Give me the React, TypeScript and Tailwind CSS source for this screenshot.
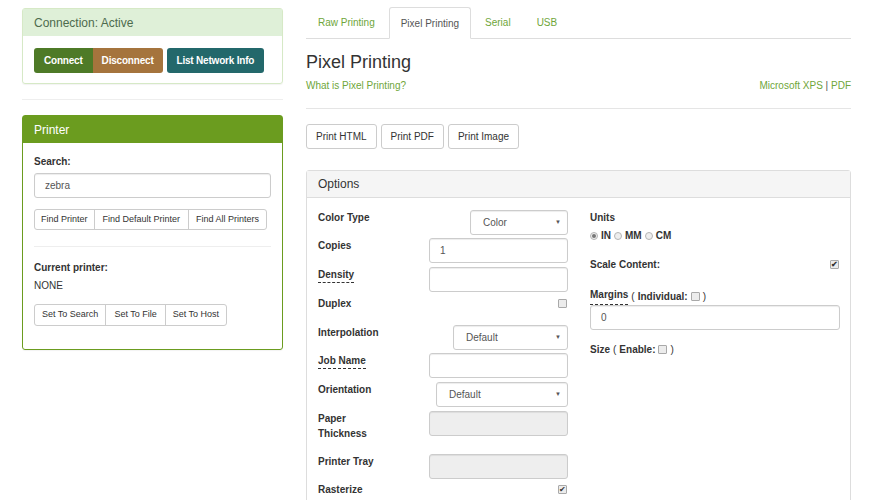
import React from 'react'

const font = { fontFamily: '"Liberation Sans", Arial, sans-serif' }

function Check({ checked = false }: { checked?: boolean }) {
  return (
    <span className="inline-flex h-[9px] w-[9px] items-center justify-center rounded-[1px] border border-[#a9a9a9] bg-[#ececec] text-[8px] leading-none text-[#333]">
      {checked ? '✔' : ''}
    </span>
  )
}

function Radio({ checked = false }: { checked?: boolean }) {
  return (
    <span className="inline-flex h-[8px] w-[8px] items-center justify-center rounded-full border border-[#b5b5b5] bg-[#eee]">
      {checked && <span className="h-[4px] w-[4px] rounded-full bg-[#777]" />}
    </span>
  )
}

function Dashed({ children }: { children: React.ReactNode }) {
  return <span className="border-b border-dashed border-[#333] pb-[2px]">{children}</span>
}

function Select({ value, w }: { value: string; w: string }) {
  return (
    <div className={`${w} flex h-[25px] items-center justify-between rounded-[3px] border border-[#ccc] bg-white pl-[12px] pr-[6px] text-[10px] text-[#555] shadow-[inset_0_1px_1px_rgba(0,0,0,0.075)]`}>
      <span>{value}</span>
      <span className="text-[6px]">▼</span>
    </div>
  )
}

function Input({ value = '', disabled = false, w = 'w-[139px]' }: { value?: string; disabled?: boolean; w?: string }) {
  return (
    <div
      className={`${w} flex h-[25px] items-center rounded-[3px] border border-[#ccc] px-[10px] text-[10px] text-[#555] shadow-[inset_0_1px_1px_rgba(0,0,0,0.075)] ${
        disabled ? 'bg-[#eee]' : 'bg-white'
      }`}
    >
      {value}
    </div>
  )
}

function Row({ label, h, children }: { label: React.ReactNode; h: string; children?: React.ReactNode }) {
  return (
    <div className={`flex items-start justify-between ${h}`}>
      <div className="whitespace-nowrap text-[10px] font-bold leading-[15px] text-[#333]">{label}</div>
      {children}
    </div>
  )
}

export default function App() {
  return (
    <div style={font} className="flex h-[500px] w-[888px] gap-[23px] overflow-hidden bg-white pl-[22px] pt-[8px] text-[#333]">
      {/* left column */}
      <div className="w-[261px] shrink-0">
        <div className="rounded-[3px] border border-[#d6e9c6] shadow-[0_1px_1px_rgba(0,0,0,0.05)]">
          <div className="flex h-[27px] items-center bg-[#dff0d8] px-[11px] text-[12px] text-[#4d6b4d]">Connection: Active</div>
          <div className="flex gap-[4px] whitespace-nowrap px-[11px] pb-[10px] pt-[12px] text-[10px] font-bold tracking-[-0.2px] text-white">
            <div className="flex">
              <span className="flex h-[25px] items-center rounded-l-[3px] bg-[#4e7a27] px-[10px]">Connect</span>
              <span className="flex h-[25px] items-center rounded-r-[3px] bg-[#a5743d] px-[9px]">Disconnect</span>
            </div>
            <span className="flex h-[25px] items-center rounded-[3px] bg-[#23686b] px-[10px]">List Network Info</span>
          </div>
        </div>

        <div className="my-[15px] border-t border-[#eee]" />

        <div className="rounded-[3px] border border-[#6b9c1f] shadow-[0_1px_1px_rgba(0,0,0,0.05)]">
          <div className="flex h-[27px] items-center bg-[#6b9c1f] px-[11px] text-[12px] text-white">Printer</div>
          <div className="px-[11px] pb-[23px] pt-[12px]">
            <div className="text-[10px] font-bold leading-[14px]">Search:</div>
            <Input value="zebra" w="w-[237px] mt-[4px]" />
            <div className="mt-[11px] flex whitespace-nowrap text-[9px] text-[#333]">
              <span className="flex h-[21px] items-center rounded-l-[3px] border border-[#ccc] px-[6px]">Find Printer</span>
              <span className="-ml-px flex h-[21px] items-center border border-[#ccc] px-[8px]">Find Default Printer</span>
              <span className="-ml-px flex h-[21px] items-center rounded-r-[3px] border border-[#ccc] px-[7px]">Find All Printers</span>
            </div>
            <div className="mt-[16px] border-t border-[#eee]" />
            <div className="mt-[14px] text-[10px] font-bold leading-[14px]">Current printer:</div>
            <div className="mt-[4px] text-[10px] leading-[14px]">NONE</div>
            <div className="mt-[11px] flex whitespace-nowrap text-[9px] text-[#333]">
              <span className="flex h-[22px] items-center rounded-l-[3px] border border-[#ccc] px-[7px]">Set To Search</span>
              <span className="-ml-px flex h-[22px] items-center border border-[#ccc] px-[8px]">Set To File</span>
              <span className="-ml-px flex h-[22px] items-center rounded-r-[3px] border border-[#ccc] px-[7px]">Set To Host</span>
            </div>
          </div>
        </div>
      </div>

      {/* right column */}
      <div className="w-[545px] shrink-0">
        <div className="-mt-[1px] flex border-b border-[#ddd] text-[10px]">
          <span className="mr-[2px] flex h-[31px] items-center px-[12px] text-[#6fa63a]">Raw Printing</span>
          <span className="-mb-px mr-[2px] flex h-[32px] items-center rounded-t-[3px] border border-b-white border-[#ddd] bg-white px-[11px] text-[#555]">Pixel Printing</span>
          <span className="mr-[2px] flex h-[31px] items-center px-[12px] text-[#6fa63a]">Serial</span>
          <span className="flex h-[31px] items-center px-[12px] text-[#6fa63a]">USB</span>
        </div>

        <h2 className="mt-[12px] text-[18px] leading-[22px] text-[#333]">Pixel Printing</h2>
        <div className="mt-[6px] flex justify-between text-[10px] leading-[14px] text-[#6fa63a]">
          <span>What is Pixel Printing?</span>
          <span>
            Microsoft XPS <span className="text-[#555]">|</span> PDF
          </span>
        </div>
        <div className="mt-[15px] border-t border-[#e5e5e5]" />

        <div className="mt-[15px] flex gap-[4px] text-[10px]">
          <span className="flex h-[25px] items-center rounded-[3px] border border-[#ccc] px-[9px]">Print HTML</span>
          <span className="flex h-[25px] items-center rounded-[3px] border border-[#ccc] px-[9px]">Print PDF</span>
          <span className="flex h-[25px] items-center rounded-[3px] border border-[#ccc] px-[9px]">Print Image</span>
        </div>

        <div className="mt-[21px] rounded-t-[3px] border border-[#ddd]">
          <div className="flex h-[27px] items-center border-b border-[#ddd] bg-[#f5f5f5] px-[11px] text-[12px] text-[#333]">Options</div>
          <div className="grid grid-cols-2 gap-[22px] pl-[11px] pr-[10px] pt-[12px]">
            <div>
              <Row label="Color Type" h="h-[28px]">
                <Select value="Color" w="w-[98px]" />
              </Row>
              <Row label="Copies" h="h-[29px]">
                <Input value="1" />
              </Row>
              <Row label={<Dashed>Density</Dashed>} h="h-[29px]">
                <Input />
              </Row>
              <Row label="Duplex" h="h-[29px]">
                <span className="mr-[1px] mt-[3px] flex">
                  <Check />
                </span>
              </Row>
              <Row label="Interpolation" h="h-[28px]">
                <Select value="Default" w="w-[115px]" />
              </Row>
              <Row label={<Dashed>Job Name</Dashed>} h="h-[29px]">
                <Input />
              </Row>
              <Row label="Orientation" h="h-[29px]">
                <Select value="Default" w="w-[132px]" />
              </Row>
              <Row
                label={
                  <>
                    Paper
                    <br />
                    Thickness
                  </>
                }
                h="h-[43px]"
              >
                <Input disabled />
              </Row>
              <Row label="Printer Tray" h="h-[28px]">
                <Input disabled />
              </Row>
              <Row label="Rasterize" h="h-[29px]">
                <span className="mr-[1px] mt-[3px] flex">
                  <Check checked />
                </span>
              </Row>
            </div>

            <div className="text-[10px] font-bold">
              <div className="leading-[15px]">Units</div>
              <div className="mt-[3px] flex items-center gap-[3px] leading-[15px]">
                <Radio checked /> IN <Radio /> MM <Radio /> CM
              </div>
              <div className="mt-[14px] flex items-center justify-between leading-[15px]">
                <span>Scale Content:</span>
                <span className="mr-[1px] flex">
                  <Check checked />
                </span>
              </div>
              <div className="mt-[15px] flex items-center leading-[15px]">
                <Dashed>Margins</Dashed>
                <span className="ml-[3px] font-normal">(</span>
                <span className="ml-[3px]">Individual:</span>
                <span className="ml-[3px] flex">
                  <Check />
                </span>
                <span className="ml-[3px] font-normal">)</span>
              </div>
              <div className="mt-0 font-normal">
                <Input value="0" w="w-[250px]" />
              </div>
              <div className="mt-[12px] flex items-center leading-[15px]">
                <span>Size</span>
                <span className="ml-[3px] font-normal">(</span>
                <span className="ml-[3px]">Enable:</span>
                <span className="ml-[3px] flex">
                  <Check />
                </span>
                <span className="ml-[3px] font-normal">)</span>
              </div>
            </div>
          </div>
          <div className="h-[40px]" />
        </div>
      </div>
    </div>
  )
}
